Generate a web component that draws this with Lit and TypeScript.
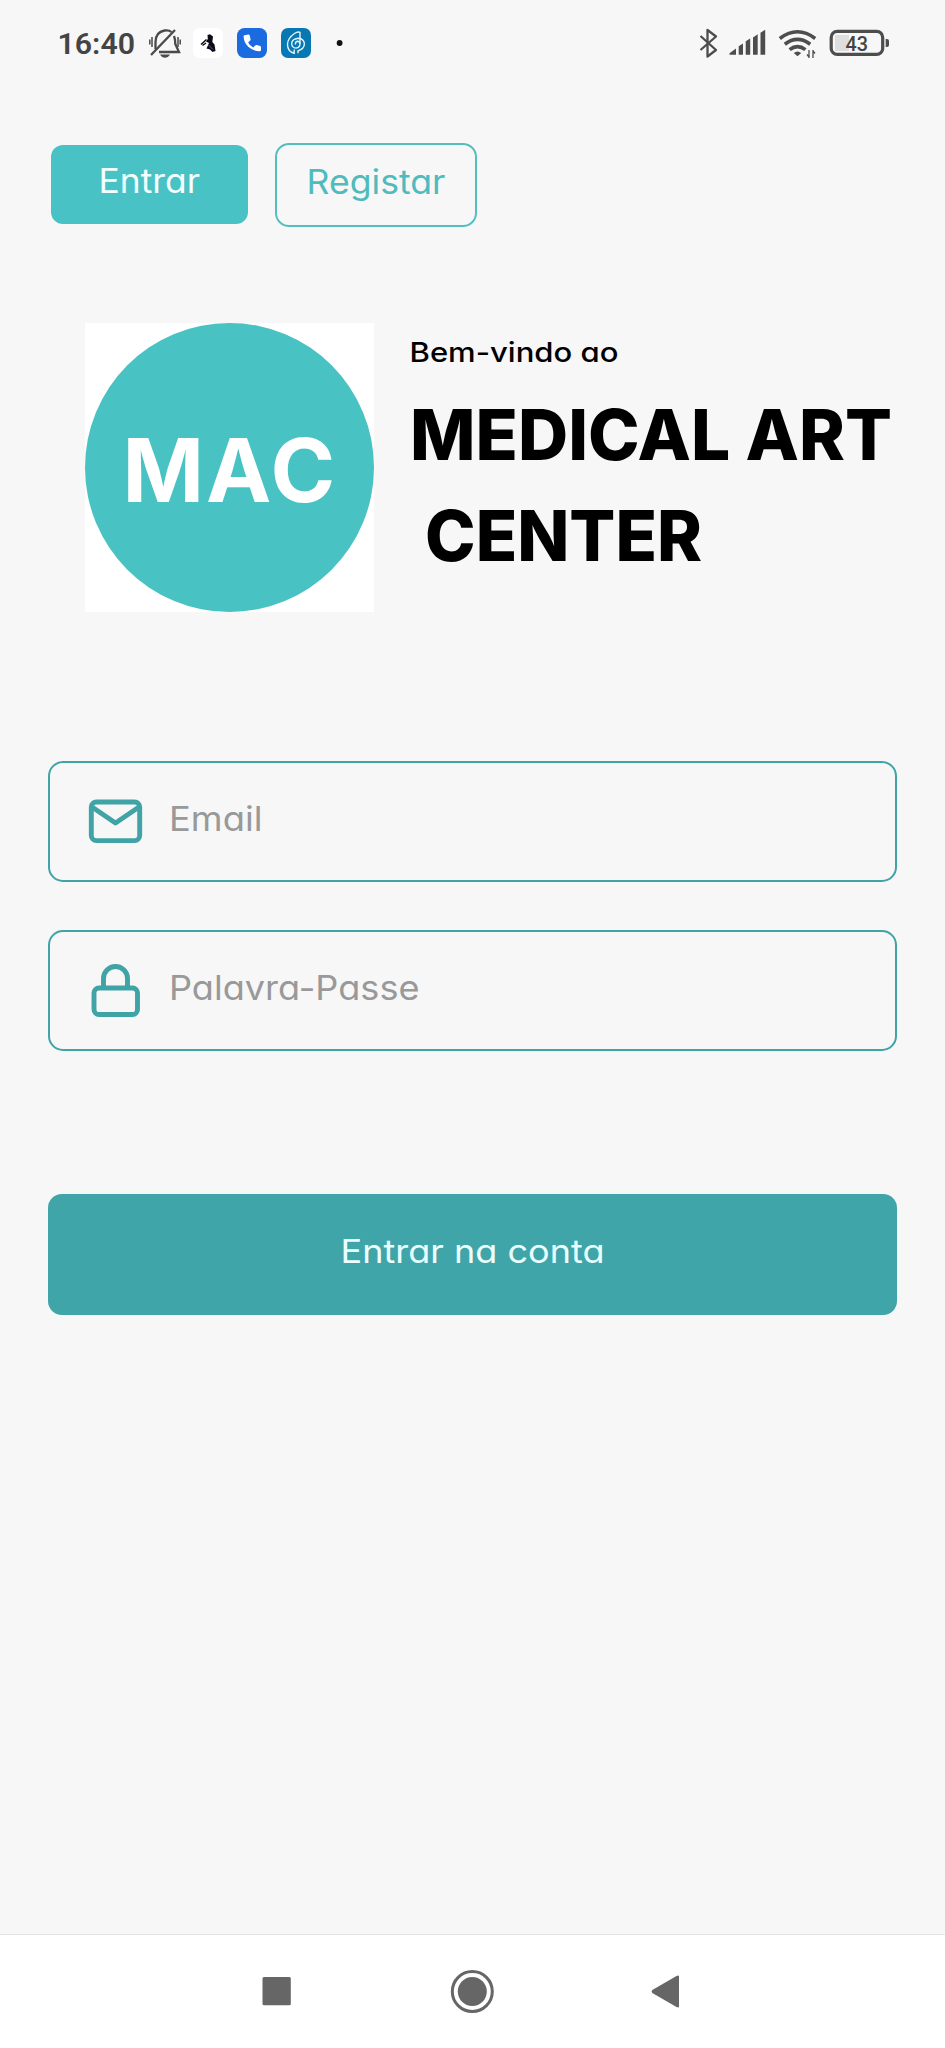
import { LitElement, html, svg, css } from "lit";
import { customElement } from "lit/decorators.js";

/** One line of text fitted to a given advance width; y is the baseline. */
const line = (cls: string, w: number, h: number, x: number, y: number, size: number, len: number, text: string) => html`
  <svg class="line ${cls}" width=${w} height=${h} role="text">
    <text x=${x} y=${y} font-size=${size} textLength=${len} lengthAdjust="spacingAndGlyphs">${text}</text>
  </svg>`;

@customElement("status-bar")
export class StatusBar extends LitElement {
  static styles = css`
    :host { display: flex; justify-content: space-between; height: 86px; padding: 0 56px 0 57px; box-sizing: border-box; }
    svg { display: block; }
    .clock { font-family: Roboto, sans-serif; font-weight: 600; fill: #444; }
    .level { font-family: Roboto, sans-serif; font-weight: 500; fill: #444; }
  `;
  render() {
    return html`
      <svg width="300" height="86" viewBox="57 0 300 86">
        <text class="clock" x="57.5" y="54" font-size="29.5" textLength="77.5" lengthAdjust="spacingAndGlyphs">16:40</text>
        <g fill="none" stroke="#4a4a4a" stroke-width="2.3">
          <path d="M151 55L175 30"/>
          <path d="M155.500 49V42C155.500 35 159 31.500 164.500 30.500Q169 29.800 171.500 32M174 36Q175.300 39 175.300 44L179 52H159"/>
          <path d="M152 37V47M149.800 39.500V44.500M178 37V47M180.200 39.500V44.500" stroke-width="1.500"/>
        </g>
        <path d="M160 54.500H170Q168 57.800 165 57.800T160 54.500Z" fill="#4a4a4a"/>
        <rect x="193" y="28" width="30" height="30" rx="7" fill="#fff"/>
        <path d="M207.500 35L210 34.300L213 36.500L212.300 42L214.500 44.500L215.500 51L212.500 52L210 49.500L206.500 48.500L209 43L206 41.500L207.800 39Z" fill="#0b0b18"/>
        <path d="M206.500 39.500L201 44.500M206 43L202.500 45.500" stroke="#0b0b18" stroke-width="1.500"/>
        <path d="M208.500 45L213 49.500" stroke="#6a6790" stroke-width=".9"/>
        <rect x="237" y="28" width="30" height="30" rx="7.500" fill="#1b6be0"/>
        <path d="M244.500 35.200L248.500 34.600Q249.400 34.600 249.700 35.500L250.600 39.200Q250.700 40 250.200 40.500L248.100 42.400Q250 45.800 253.200 47.600L255.200 45.500Q255.800 44.900 256.600 45.100L260.100 46Q261 46.300 261 47.200V50Q260.900 51.300 259.600 51.300Q253.500 51.400 248.200 46.800Q243.500 42 243.600 36.300Q243.700 35.400 244.500 35.200Z" fill="#fff"/>
        <rect x="281" y="28" width="30" height="30" rx="7" fill="#0878b2"/>
        <g fill="none" stroke="#e3f4fb" stroke-width="1.400">
          <path d="M300 43.500V32.300Q297.500 31.500 294.500 33.500Q287.500 38.300 287.500 44.500Q287.600 51.500 294.200 53.300V49.500"/>
          <path d="M298 53.300V50.800Q304.300 48.800 304.400 44Q304.200 39.300 299 38.300Q292 38.600 291.600 43.500Q292 48 296 48.100Q300 47.600 300 43.500Q299.500 41.200 297.300 41.300Q295.200 41.800 295.400 44.500"/>
        </g>
        <circle cx="339.600" cy="43" r="2.900" fill="#111"/>
      </svg>
      <svg width="196" height="86" viewBox="693 0 196 86">
        <path d="M700.500 36L716 50L707.500 56.500V30L716 36.500L700.500 50" fill="none" stroke="#4d4d4d" stroke-width="2.300" stroke-linejoin="round"/>
        <path d="M729.500 54.800V53.300L736 48.500V54.800ZM738.700 54.800V46.300L743 43.400V54.800ZM745.700 54.800V41.200L750.200 38.400V54.800ZM753 54.800V37.500L757.700 34.300V54.800ZM760.500 54.800V32.800L765.200 29.800V54.800Z" fill="#4d4d4d"/>
        <g fill="none" stroke="#4d4d4d" stroke-width="3.600">
          <path d="M779.800 38.500Q797.500 25 815.200 38.500"/>
          <path d="M784.800 44.200Q797.500 34.500 810.200 44.200"/>
          <path d="M789.600 49.600Q797.500 43.500 805.400 49.600"/>
        </g>
        <path d="M793.800 53Q797.500 50 801.200 53L797.500 56.200Z" fill="#4d4d4d"/>
        <path d="M809 50V58M813 50V58M807 54.500L809 57M815 53.500L813 51" stroke="#4d4d4d" stroke-width="1.300"/>
        <rect x="835" y="35" width="14" height="16" fill="#dedede"/>
        <rect x="831.200" y="31.400" width="51.500" height="23" rx="6" fill="none" stroke="#4d4d4d" stroke-width="3.200"/>
        <path d="M885.700 39H887Q889 39 889 41V45Q889 47 887 47H885.700Z" fill="#4d4d4d"/>
        <text class="level" x="845.500" y="50.700" font-size="19.500" textLength="22.500" lengthAdjust="spacingAndGlyphs">43</text>
      </svg>`;
  }
}

@customElement("nav-bar")
export class NavBar extends LitElement {
  static styles = css`
    :host { display: flex; height: 114px; background: #fff; border-top: 1px solid #e4e4e4; box-sizing: border-box; justify-content: center; }
    svg { display: block; }
  `;
  render() {
    return html`
      <svg width="945" height="113" viewBox="0 1935 945 113" fill="#666">
        <rect x="262.500" y="1977" width="28.300" height="28.300" rx="1.500"/>
        <circle cx="472.300" cy="1991.500" r="14.500"/>
        <circle cx="472.300" cy="1991.500" r="20" fill="none" stroke="#666" stroke-width="3"/>
        <path d="M652.300 1990.100L676.500 1976Q679 1975 679 1976.500V2006.500Q679 2008 676.500 2007L652.300 1992.900Q650.800 1991.500 652.300 1990.100Z"/>
      </svg>`;
  }
}

@customElement("app-root")
export class AppRoot extends LitElement {
  static styles = css`
    :host {
      display: flex; flex-direction: column; width: 945px; height: 2048px; overflow: hidden;
      background: #f7f7f7; font-family: Inter, "Noto Sans", sans-serif; font-feature-settings: "cv11" 1, "calt" 0;
    }
    svg { display: block; flex: none; overflow: visible; }
    main { flex: 1; display: flex; flex-direction: column; padding: 57px 48px 0; }
    .tabs { display: flex; align-items: center; gap: 27px; padding-left: 3px; }
    .tab { box-sizing: border-box; border-radius: 12px; }
    .active { width: 197px; height: 79px; margin-bottom: 1px; background: #49c2c5; fill: #f2ffff; }
    .outline { width: 202px; height: 84px; border: 2px solid #55bfc0; border-radius: 14px; fill: #50bbbd; }
    .hero { display: flex; margin-top: 96px; padding-left: 37px; gap: 36px; }
    .logo { width: 289px; height: 289px; background: #fff; }
    .badge { width: 289px; height: 289px; border-radius: 50%; background: #48c2c3; fill: #fff; }
    .heading { display: flex; flex-direction: column; fill: #000; }
    .mac { font-weight: 700; }
    .title { font-weight: 800; }
    .hello { font-weight: 450; }
    .form { display: flex; flex-direction: column; gap: 48px; margin-top: 149px; }
    .field { box-sizing: border-box; display: flex; height: 121px; border: 2px solid #40a3a6; border-radius: 15px; }
    .field .line { fill: #999; font-weight: 420; }
    .submit { height: 121px; margin-top: 143px; border-radius: 14px; background: #40a5a9; fill: #eaffff; }
  `;
  render() {
    const icon = (d: unknown) => html`<svg width="119" height="117" viewBox="50 764 119 117" fill="none" stroke="#40a3a6" stroke-width="4.900" stroke-linejoin="round">${d}</svg>`;
    return html`
      <status-bar></status-bar>
      <main>
        <div class="tabs">
          <div class="tab active">${line("", 197, 79, 47.500, 48, 33.500, 101.500, "Entrar")}</div>
          <div class="tab outline">${line("", 198, 80, 29.500, 48.500, 33.500, 139, "Registar")}</div>
        </div>
        <div class="hero">
          <div class="logo">
            <div class="badge">
              <svg class="mac" width="289" height="289"><text x="37.500 121 185.500" y="179" font-size="87.500">MAC</text></svg>
            </div>
          </div>
          <div class="heading">
            ${line("hello", 480, 62, -0.500, 38.500, 27.500, 209, "Bem-vindo ao")}
            ${line("title", 480, 102, 0, 74.500, 70, 482, "MEDICAL ART")}
            ${line("title", 480, 102, 15, 74, 70, 277, "CENTER")}
          </div>
        </div>
        <div class="form">
          <div class="field">
            ${icon(svg`<rect x="91.300" y="803" width="48.400" height="38.600" rx="5"/><path d="M92 808L115.500 824L139 808"/>`)}
            ${line("", 300, 117, 0, 67.500, 33.500, 93.500, "Email")}
          </div>
          <div class="field">
            ${icon(svg`<rect x="94" y="820" width="43.500" height="26.500" rx="5"/><path d="M103.500 820V810.500A12 12 0 0 1 127.500 810.500V820"/>`)}
            ${line("", 300, 117, 0, 67.500, 33.500, 250.500, "Palavra-Passe")}
          </div>
        </div>
        <div class="submit">${line("", 849, 121, 292.500, 69, 33, 264, "Entrar na conta")}</div>
      </main>
      <nav-bar></nav-bar>`;
  }
}
